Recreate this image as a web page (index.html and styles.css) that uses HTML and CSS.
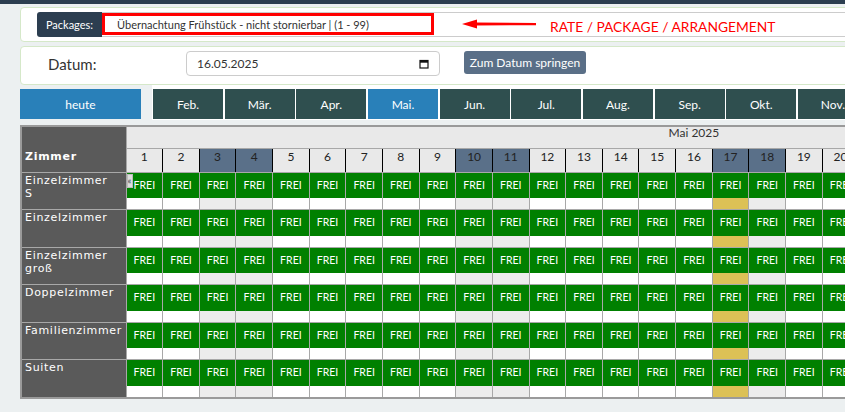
FILE: index.html
```html
<!DOCTYPE html>
<html lang="de">
  <head>
    <meta charset="UTF-8" />
    <meta name="viewport" content="width=device-width, initial-scale=1.0" />
    <title>Belegungsplan</title>
    <link rel="stylesheet" href="styles.css">
  </head>
  <body>
    <div class="topbar"></div>
    <div class="page">
      <div class="panel paket">
        <span class="paket-label">Packages:</span>
        <div class="paket-select">Übernachtung Frühstück - nicht stornierbar | (1 - 99)</div>
        <div class="markierung"></div>
        <svg class="pfeil" width="76" height="12" viewBox="0 0 76 12">
          <polygon points="0,6 15,1.5 15,10.5" fill="#f00" />
          <polygon points="14,4.5 74,5 74,7.2 14,7.5" fill="#f00" />
        </svg>
        <span class="hinweis">RATE / PACKAGE / ARRANGEMENT</span>
      </div>

      <div class="panel datum">
        <label class="datum-label">Datum:</label>
        <div class="datum-feld">
          <span>16.05.2025</span>
          <svg width="10" height="10" viewBox="0 0 10 10">
            <rect x="1" y="1.5" width="8" height="7.5" fill="none" stroke="#111" stroke-width="1.2" />
            <rect x="1" y="1.5" width="8" height="2.2" fill="#111" />
          </svg>
        </div>
        <button class="springen">Zum Datum springen</button>
      </div>

      <div class="monate">
        <button class="heute">heute</button>
        <div class="monat-liste">
          <button class="monat">Feb.</button>
          <button class="monat">Mär.</button>
          <button class="monat">Apr.</button>
          <button class="monat aktiv">Mai.</button>
          <button class="monat">Jun.</button>
          <button class="monat">Jul.</button>
          <button class="monat">Aug.</button>
          <button class="monat">Sep.</button>
          <button class="monat">Okt.</button>
          <button class="monat">Nov.</button>
          <button class="monat">Dez.</button>
        </div>
      </div>

      <table class="plan">
        <colgroup id="spalten"></colgroup>
        <thead>
          <tr>
            <th class="zimmer-kopf" rowspan="2">Zimmer</th>
            <th class="monat-kopf" colspan="31">Mai 2025</th>
          </tr>
          <tr id="tage"></tr>
        </thead>
        <tbody id="zeilen"></tbody>
      </table>
    </div>

    <script>
      const spalten = document.getElementById("spalten");
      const tage = document.getElementById("tage");
      const zeilen = document.getElementById("zeilen");

      const wochenende = [3, 4, 10, 11, 17, 18, 24, 25, 31];
      const zimmer = [
        "Einzelzimmer S",
        "Einzelzimmer",
        "Einzelzimmer groß",
        "Doppelzimmer",
        "Familienzimmer",
        "Suiten",
      ];

      // spaltenbreiten
      const raumSpalte = document.createElement("col");
      raumSpalte.className = "c-raum";
      spalten.appendChild(raumSpalte);
      for (let d = 1; d <= 31; d++) {
        const c = document.createElement("col");
        c.className = "c-tag";
        spalten.appendChild(c);

        const th = document.createElement("th");
        th.className = wochenende.includes(d) ? "tag we" : "tag";
        th.textContent = d;
        tage.appendChild(th);
      }

      zimmer.forEach((name, i) => {
        const tr = document.createElement("tr");
        const raum = document.createElement("td");
        raum.className = "raum";
        raum.innerHTML = "<span>" + name + "</span>";
        tr.appendChild(raum);

        for (let d = 1; d <= 31; d++) {
          const td = document.createElement("td");
          td.className = "frei";
          if (d === 17) {
            td.classList.add("gelb");
          } else if (wochenende.includes(d)) {
            td.classList.add("we");
          }
          td.innerHTML = '<div class="frei-oben">FREI</div><div class="frei-unten"></div>';
          if (i === 0 && d === 1) {
            td.innerHTML += '<span class="zurueck">«</span>';
          }
          tr.appendChild(td);
        }
        zeilen.appendChild(tr);
      });
    </script>
  </body>
</html>
```

FILE: styles.css
```css
* {
  box-sizing: border-box;
}

body {
  margin: 0;
  background-color: #ecf0f1;
  font-family: Lato, "Noto Sans", sans-serif;
  color: #333;
  overflow: hidden;
}

.topbar {
  height: 4px;
  background-color: #2c3e50;
}

.page {
  width: 1300px;
  padding-left: 20px;
}

/* Kopfbereich */
.panel {
  background-color: #fff;
  border: 1px solid #d5e8c9;
  border-radius: 4px;
  display: flex;
  align-items: flex-start;
}

.paket {
  position: relative;
  margin-top: 3px;
  height: 35px;
  padding: 4px 0 0 16px;
}

.paket-label {
  width: 65px;
  height: 25px;
  background-color: #2c3e50;
  color: #fff;
  font-size: 11px;
  line-height: 25px;
  text-align: center;
  border-radius: 3px 0 0 3px;
}

.paket-select {
  flex: 1;
  height: 25px;
  border: 1px solid #ccc;
  border-left: none;
  font-size: 11px;
  line-height: 23px;
  padding-left: 15px;
  color: #333;
}

.markierung {
  position: absolute;
  left: 81px;
  top: 5px;
  width: 332px;
  height: 22px;
  border: 3px solid #f00;
}

.pfeil {
  position: absolute;
  left: 441px;
  top: 10px;
}

.hinweis {
  position: absolute;
  left: 529px;
  top: 12px;
  font-size: 13.8px;
  line-height: 14px;
  color: #f00;
}

.datum {
  margin-top: 4px;
  height: 39px;
  padding: 4px 0 0 27px;
}

.datum-label {
  width: 138px;
  font-size: 15px;
  line-height: 27px;
  color: #333;
}

.datum-feld {
  width: 254px;
  height: 25px;
  border: 1px solid #ccc;
  border-radius: 4px;
  display: flex;
  align-items: center;
  justify-content: space-between;
  padding: 0 10px;
  font-size: 12px;
  color: #333;
}

.springen {
  margin-left: 24px;
  width: 122px;
  height: 23px;
  padding: 0;
  border: none;
  border-radius: 3px;
  background-color: #5a6f87;
  color: #fff;
  font-family: inherit;
  font-size: 12px;
}

/* Monatsleiste */
.monate {
  display: flex;
  align-items: flex-start;
}

.heute {
  margin-top: 4px;
  width: 121px;
  height: 30px;
  border: none;
  background-color: #2980b9;
  color: #fff;
  font-family: inherit;
  font-size: 12px;
}

.monat-liste {
  margin-left: 11px;
  padding: 4px 0 1px 1px;
  background-color: #fff;
  display: flex;
  gap: 1.67px;
}

.monat {
  width: 70px;
  height: 30px;
  padding: 0;
  border: none;
  background-color: #2f4f4f;
  color: #fff;
  font-family: inherit;
  font-size: 12px;
}

.monat.aktiv {
  background-color: #2980b9;
}

/* Belegungstabelle */
.plan {
  margin-top: 5px;
  border-collapse: collapse;
  table-layout: fixed;
  width: 1241px;
  border: 2px solid #9a9a9a;
}

.c-raum {
  width: 105px;
}

.c-tag {
  width: 36.65px;
}

.plan th,
.plan td {
  padding: 0;
  border: 1px solid #a8a8a8;
}

.zimmer-kopf {
  background-color: #5a5a5a;
  color: #fff;
  font-family: "DejaVu Sans", sans-serif;
  font-size: 11px;
  font-weight: bold;
  letter-spacing: 0.7px;
  text-align: left;
  vertical-align: bottom;
  padding: 0 0 9px 3px !important;
}

.monat-kopf {
  height: 22px;
  background-color: #e9e9e9;
  font-size: 12px;
  font-weight: normal;
  color: #333;
  vertical-align: top;
  line-height: 12px;
}

.tag {
  height: 24px;
  background-color: #e9e9e9;
  border-right: 1px solid #000 !important;
  font-size: 12px;
  font-weight: normal;
  color: #222;
  vertical-align: top;
  line-height: 14px;
  padding-top: 1px !important;
}

.tag.we {
  background-color: #5a7089;
}

.raum {
  background-color: #5a5a5a;
  color: #fff;
  font-family: "DejaVu Sans", sans-serif;
  font-size: 11px;
  letter-spacing: 0.7px;
  line-height: 13px;
  vertical-align: top;
  padding: 1px 3px 0 !important;
}

.raum span {
  display: block;
  width: 92px;
}

.frei {
  position: relative;
}

.frei-oben {
  height: 25.6px;
  background-color: #008000;
  color: #fff;
  font-size: 10.5px;
  line-height: 25.6px;
  text-align: center;
}

.frei-unten {
  height: 11px;
  background-color: #fff;
}

.we .frei-unten {
  background-color: #ececec;
}

.gelb .frei-unten {
  background-color: #dcc156;
}

.zurueck {
  position: absolute;
  left: 0;
  top: 1px;
  width: 6px;
  height: 14px;
  background-color: #ddd;
  border: 1px solid #bbb;
  font-size: 9px;
  line-height: 11px;
  color: #345;
  text-align: center;
  overflow: hidden;
}
```
